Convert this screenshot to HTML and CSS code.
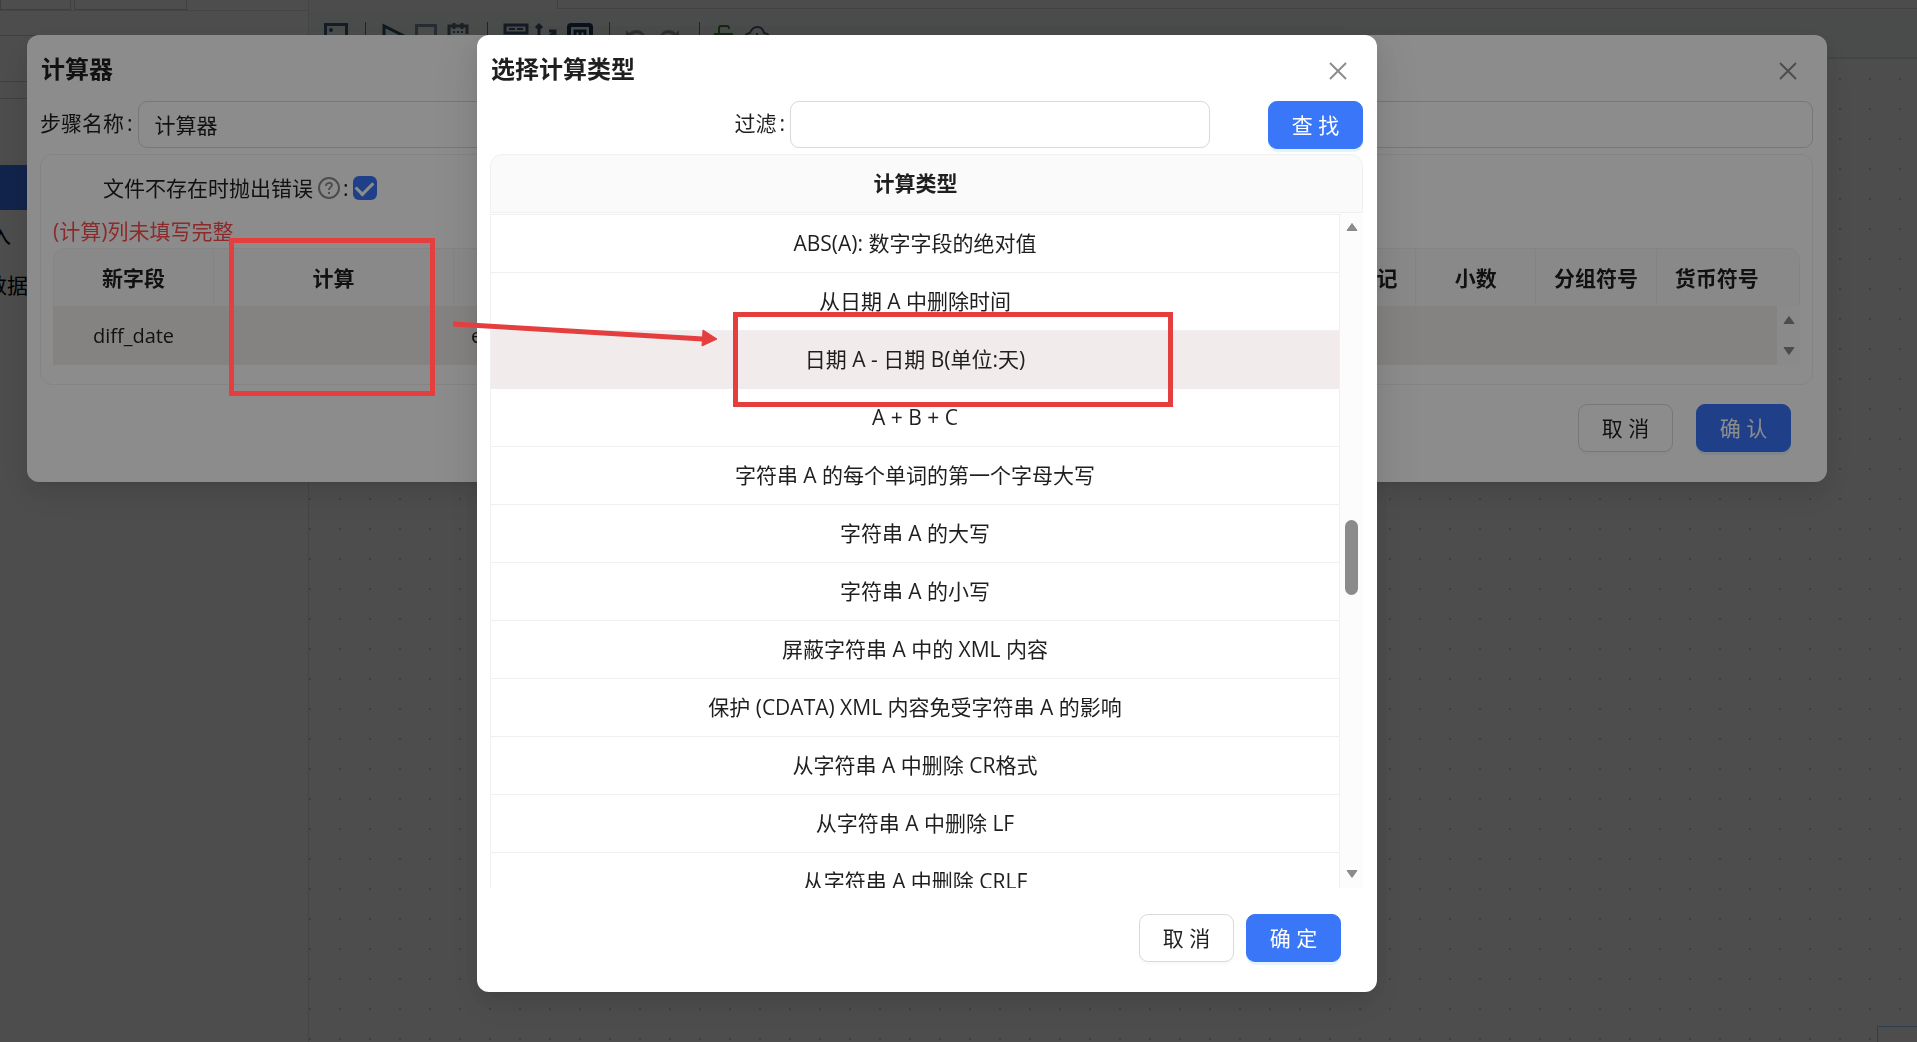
FILE: index.html
```html
<!DOCTYPE html>
<html lang="zh-CN">
<head>
<meta charset="utf-8">
<title>计算器</title>
<link rel="stylesheet" href="styles.css">
</head>
<body>
<div class="app">
  <aside class="sidebar">
    <div class="side-tabs"><span class="side-tab side-tab-first"></span><span class="side-tab"></span></div>
    <div class="side-row side-row-a"></div>
    <div class="side-row side-row-b"></div>
    <div class="side-row side-row-c"></div>
    <div class="side-active"></div>
    <div class="side-item side-item-input">入</div>
    <div class="side-item side-item-data">数据</div>
  </aside>
  <main class="workspace">
    <div class="topbar"><div class="topbar-tab"></div></div>
    <div class="toolbar">
      <svg class="tool" viewBox="0 0 32 32"><path d="M5.500 5.500h21v21h-21z" fill="none" stroke="#3d6080" stroke-width="3"/><circle cx="11" cy="11" r="2" fill="#3d6080"/></svg>
      <span class="tool-sep"></span>
      <svg class="tool" viewBox="0 0 32 32"><path d="M6 7v20l20-10z" fill="none" stroke="#31506f" stroke-width="3"/></svg>
      <svg class="tool" viewBox="0 0 32 32"><path d="M6.500 6.500h19v19h-19z" fill="none" stroke="#8390a8" stroke-width="3"/></svg>
      <svg class="tool" viewBox="0 0 32 32"><path d="M7 26V7h18v8M12 4v6M20 4v6" fill="none" stroke="#5a6b82" stroke-width="3"/><path d="M11 13h11M11 17h11" stroke="#5a6b82" stroke-width="2" stroke-dasharray="2 2"/></svg>
      <span class="tool-sep"></span>
      <svg class="tool" viewBox="0 0 32 32"><path d="M5 6h22v8H5z" fill="none" stroke="#44597c" stroke-width="3"/><path d="M9 10h6M17 10h6" stroke="#44597c" stroke-width="2"/></svg>
      <svg class="tool" viewBox="0 0 32 32"><path d="M7 26V6M4 9l3-3 3 3M9 24l14-11M17 12h6v6" fill="none" stroke="#44597c" stroke-width="3"/></svg>
      <svg class="tool" viewBox="0 0 32 32"><rect x="5" y="6" width="22" height="21" rx="2" fill="none" stroke="#1d3a5c" stroke-width="4"/><path d="M11 22V12h10v10M16 12v10" fill="none" stroke="#1d3a5c" stroke-width="3"/></svg>
      <span class="tool-sep"></span>
      <svg class="tool" viewBox="0 0 32 32"><path d="M4 11v10h9l-4-4c5-5 10-3 15 3-1-9-11-12-17-6z" fill="#9a9a9a"/></svg>
      <svg class="tool" viewBox="0 0 32 32"><path d="M25 11v10h-9l4-4c-5-5-10-3-15 3 1-9 11-12 17-6z" fill="#9a9a9a"/></svg>
      <span class="tool-sep"></span>
      <svg class="tool" viewBox="0 0 32 32"><path d="M3 15h17v12H3zM7 15V9q0-2 2-2h6q2 0 2 3" fill="none" stroke="#3f8a2c" stroke-width="2"/></svg>
      <svg class="tool" viewBox="0 0 32 32"><path d="M6 24c-8-2-6-9 0-10 3-8 12-8 14 0 7 1 7 9 0 10M13 14v12" fill="none" stroke="#50607a" stroke-width="2"/></svg>
    </div>
    <div class="canvas"><div class="minimap"></div></div>
  </main>
</div>

<div class="mask mask-calculator">
  <section class="dialog dialog-calculator" role="dialog" aria-labelledby="calc-title">
    <header class="dialog-head">
      <h2 class="dialog-title" id="calc-title">计算器</h2>
      <button class="close" type="button" aria-label="关闭"><svg viewBox="0 0 18 18"><path d="M1 1l16 16M17 1L1 17"/></svg></button>
    </header>
    <div class="name-row">
      <label class="label" for="step-name">步骤名称<span class="colon">:</span></label>
      <input class="field name-field" id="step-name" type="text" value="计算器">
    </div>
    <div class="panel">
      <div class="check-row">
        <label for="throw-error">文件不存在时抛出错误</label>
        <svg class="help" viewBox="0 0 22 22"><circle cx="11" cy="11" r="10"/><path d="M8 9c0-4 6-4 6-1 0 2-3 2-3 5M11 15v2"/></svg>
        <span class="check-colon">:</span>
        <input class="check" id="throw-error" type="checkbox" checked>
      </div>
      <p class="error">(计算)列未填写完整</p>
      <div class="grid">
        <table class="fields">
          <thead>
            <tr><th class="col-new">新字段</th><th class="col-calc">计算</th><th></th><th></th><th></th><th></th><th></th><th></th><th></th><th>移除标记</th><th>小数</th><th>分组符号</th><th>货币符号</th><th class="col-scroll"></th></tr>
          </thead>
          <tbody>
            <tr><td>diff_date</td><td></td><td>end_date</td><td></td><td></td><td></td><td></td><td></td><td></td><td></td><td></td><td></td><td></td>
            <td class="col-scroll"><div class="scrollbar"><svg class="arrow" viewBox="0 0 12 9"><path d="M6 1l5 7H1z"/></svg><svg class="arrow" viewBox="0 0 12 9"><path d="M6 8l5-7H1z"/></svg></div></td></tr>
          </tbody>
        </table>
      </div>
    </div>
    <footer class="foot foot-calculator">
      <button class="btn" type="button">取 消</button>
      <button class="btn btn-primary" type="button">确 认</button>
    </footer>
  </section>
</div>

<div class="mask">
  <section class="dialog dialog-type" role="dialog" aria-labelledby="type-title">
    <header class="dialog-head">
      <h2 class="dialog-title" id="type-title">选择计算类型</h2>
      <button class="close" type="button" aria-label="关闭"><svg viewBox="0 0 18 18"><path d="M1 1l16 16M17 1L1 17"/></svg></button>
    </header>
    <div class="filter-row">
      <label class="label" for="filter">过滤<span class="colon">:</span></label>
      <input class="field filter-field" id="filter" type="text">
      <button class="btn btn-primary" type="button">查 找</button>
    </div>
    <div class="types">
      <div class="types-head" id="types-head">计算类型</div>
      <div class="types-body">
        <table class="types-table" aria-labelledby="types-head">
          <tbody>
            <tr><td>ABS(A): 数字字段的绝对值</td></tr>
            <tr><td>从日期 A 中删除时间</td></tr>
            <tr class="selected"><td>日期 A - 日期 B(单位:天)</td></tr>
            <tr><td>A + B + C</td></tr>
            <tr><td>字符串 A 的每个单词的第一个字母大写</td></tr>
            <tr><td>字符串 A 的大写</td></tr>
            <tr><td>字符串 A 的小写</td></tr>
            <tr><td>屏蔽字符串 A 中的 XML 内容</td></tr>
            <tr><td>保护 (CDATA) XML 内容免受字符串 A 的影响</td></tr>
            <tr><td>从字符串 A 中删除 CR格式</td></tr>
            <tr><td>从字符串 A 中删除 LF</td></tr>
            <tr><td>从字符串 A 中删除 CRLF</td></tr>
          </tbody>
        </table>
        <div class="scrollbar types-scroll">
          <svg class="arrow" viewBox="0 0 12 9"><path d="M6 1l5 7H1z"/></svg>
          <span class="track"><span class="thumb"></span></span>
          <svg class="arrow" viewBox="0 0 12 9"><path d="M6 8l5-7H1z"/></svg>
        </div>
      </div>
    </div>
    <footer class="foot foot-type">
      <button class="btn" type="button">取 消</button>
      <button class="btn btn-primary" type="button">确 定</button>
    </footer>
  </section>
</div>

<div class="mark mark-source"></div>
<div class="mark mark-target"></div>
<svg class="mark-arrow" viewBox="0 0 264 30"><path d="M0 9l250 15" fill="none" stroke="#e53e3e" stroke-width="5"/><path d="M250 15l14 9-15 7z" fill="#e53e3e" stroke="#e53e3e"/></svg>
</body>
</html>
```
FILE: styles.css
```css
* { box-sizing: border-box; }
body {
  margin: 0;
  font: 21px/32px "Open Sans", "Noto Sans CJK SC", sans-serif;
  color: #1f1f1f;
  background: #fff;
  overflow: hidden;
}
h2, p { margin: 0; }
button, input { font: inherit; color: inherit; }

/* Page behind the dialogs */
.app { display: flex; height: 100vh; }
.sidebar { flex: none; width: 309px; border-right: 1px solid #e4e4e4; overflow: hidden; }
.side-tabs { display: flex; gap: 3px; height: 11px; border-bottom: 1px solid #e4e4e4; }
.side-tab { width: 113px; border: solid #d0d0d0; border-width: 0 1px 1px; }
.side-tab-first { width: 71px; }
.side-row { border-bottom: 1px solid #d0d0d0; }
.side-row-a { height: 25px; }
.side-row-b { height: 46px; }
.side-row-c { height: 17px; }
.side-active { height: 45px; margin-top: 66px; background: #3a76f8; }
.side-item { height: 50px; line-height: 50px; color: #000; }
.side-item-input { text-indent: -10px; }
.side-item-data { text-indent: -14px; }
.workspace { flex: 1; min-width: 0; display: flex; flex-direction: column; }
.topbar { height: 11px; padding-left: 248px; background: #fafafa; }
.topbar-tab { height: 9px; border: solid #d8d8d8; border-width: 0 0 1px 1px; }
.toolbar { flex: none; display: flex; height: 48px; padding: 8px 0 0 11px; background: #f5faf8; border-bottom: 2px solid #dfe3e1; }
.tool { flex: none; width: 32px; height: 32px; }
.tool-sep { width: 26px; height: 26px; margin-top: 3px; background: linear-gradient(#3a76f8, #3a76f8) center / 1px 100% no-repeat; }
.canvas {
  flex: 1;
  position: relative;
  background: radial-gradient(circle at center, #d0d0d0 1px, transparent 1px) 16px 5px / 30px 30px;
}
.minimap { position: absolute; right: 0; bottom: 0; width: 40px; height: 16px; border: solid #98cdff; border-width: 1px 0 0 1px; background: #fff; }

/* Dialogs */
.mask { position: fixed; inset: 0; padding: 35px 90px 0 27px; background: rgba(0, 0, 0, .45); }
.dialog {
  margin: 0 auto;
  padding: 14px 14px 30px 13px;
  background: #fff;
  border-radius: 12px;
  box-shadow: 0 9px 24px rgba(0, 0, 0, .08), 0 4px 9px -6px rgba(0, 0, 0, .12), 0 14px 42px 12px rgba(0, 0, 0, .05);
}
.dialog-type { max-width: 900px; }
.dialog-head { display: flex; justify-content: space-between; align-items: center; height: 40px; margin-bottom: 12px; padding: 0 14px 0 1px; }
.dialog-title { font-size: 24px; line-height: 40px; font-weight: 700; }
.close { width: 22px; height: 22px; margin-top: 4px; padding: 2px; border: 0; background: none; }
.close svg { display: block; width: 18px; height: 18px; fill: none; stroke: #8c8c8c; stroke-width: 2; }
.label { flex: none; line-height: 44px; }
.colon { margin: 0 5px 0 3px; }
.field { height: 47px; padding: 0 16px 2px; border: 1px solid #d9d9d9; border-radius: 9px; background: none; }
.name-row { display: flex; align-items: flex-start; margin-bottom: 6px; }
.name-field { flex: 1; min-width: 0; }
.filter-row { display: flex; align-items: flex-start; justify-content: flex-end; height: 48px; margin-bottom: 5px; }
.filter-field { width: 420px; margin-right: 58px; }
.btn {
  width: 95px;
  height: 48px;
  padding: 0;
  border: 1px solid #d9d9d9;
  border-radius: 9px;
  background: #fff;
  box-shadow: 0 3px 0 rgba(0, 0, 0, .02);
}
.btn-primary { border-color: #3a76f8; background: #3a76f8; color: #fff; box-shadow: 0 3px 0 rgba(5, 145, 255, .1); }
.foot { display: flex; justify-content: flex-end; }
.foot-calculator { gap: 23px; margin-top: 19px; padding-right: 22px; }
.foot-type { gap: 12px; margin-top: 26px; padding-right: 22px; }

/* Calculator panel */
.panel { padding: 9px 12px 19px; border: 1px solid #f0f0f0; border-radius: 12px; }
.check-row { display: flex; align-items: center; height: 48px; padding-left: 50px; }
.help { width: 22px; height: 22px; margin-left: 5px; fill: none; stroke: #8c8c8c; stroke-width: 2; }
.check-colon { margin: 0 4px 0 3px; }
.check {
  appearance: none;
  width: 24px;
  height: 24px;
  margin: 0;
  border-radius: 6px;
  background: #3a76f8;
  display: grid;
  place-items: center;
}
.check::after { content: ""; width: 8px; height: 14px; margin-top: -4px; border: solid #fff; border-width: 0 3px 3px 0; transform: rotate(45deg); }
.error { margin-top: 3px; margin-bottom: 1px; color: #ff4d4f; }
.grid { border-radius: 12px 12px 0 0; overflow: hidden; }
.fields { width: 100%; table-layout: fixed; border-collapse: separate; border-spacing: 0; text-align: center; }
.fields th { height: 58px; padding: 0; border-top: 1px solid #f0f0f0; border-right: 1px solid #f0f0f0; background: #fafafa; font-weight: 700; }
.fields th:first-child { border-left: 1px solid #f0f0f0; border-top-left-radius: 12px; }
.fields th:last-child { border-top-right-radius: 12px; }
.fields th:nth-last-child(2) { border-right: 0; }
.fields td { height: 59px; padding: 0; background: #f1efec; font-size: 20px; }
.col-new { width: 161px; }
.col-calc { width: 240px; }
.col-scroll { width: 23px; }
.fields .col-scroll .scrollbar { height: 59px; }

.scrollbar { display: flex; flex-direction: column; justify-content: space-between; align-items: center; width: 23px; padding: 9px 0; background: #fcfcfc; }
.arrow { flex: none; width: 12px; height: 10px; fill: #8b8b8b; stroke: #8b8b8b; stroke-linejoin: round; }

/* Calculation types */
.types-head { height: 59px; line-height: 57px; border: 1px solid #f0f0f0; border-radius: 12px 12px 0 0; background: #fafafa; font-weight: 700; text-align: center; padding-right: 22px; }
.types-body { display: flex; height: 675px; overflow: hidden; }
.types-table { flex: 1; align-self: flex-start; margin-top: 1px; border-collapse: separate; border-spacing: 0; border: solid #f0f0f0; border-width: 1px 1px 0; text-align: center; }
.types-table td { height: 58px; padding: 0 0 1px; border-bottom: 1px solid #f0f0f0; }
.types-table .selected td { background: #f1ebeb; border-color: #f1ebeb; }
.track { flex: 1; padding-top: 288px; }
.thumb { display: block; width: 13px; height: 75px; border-radius: 7px; background: #8b8b8b; }

/* Annotations drawn over the screen */
.mark { position: absolute; border: 5px solid #e53e3e; }
.mark-source { left: 229px; top: 238px; width: 206px; height: 158px; }
.mark-target { left: 733px; top: 312px; width: 440px; height: 95px; }
.mark-arrow { position: absolute; left: 453px; top: 315px; width: 264px; height: 30px; overflow: visible; }
```
